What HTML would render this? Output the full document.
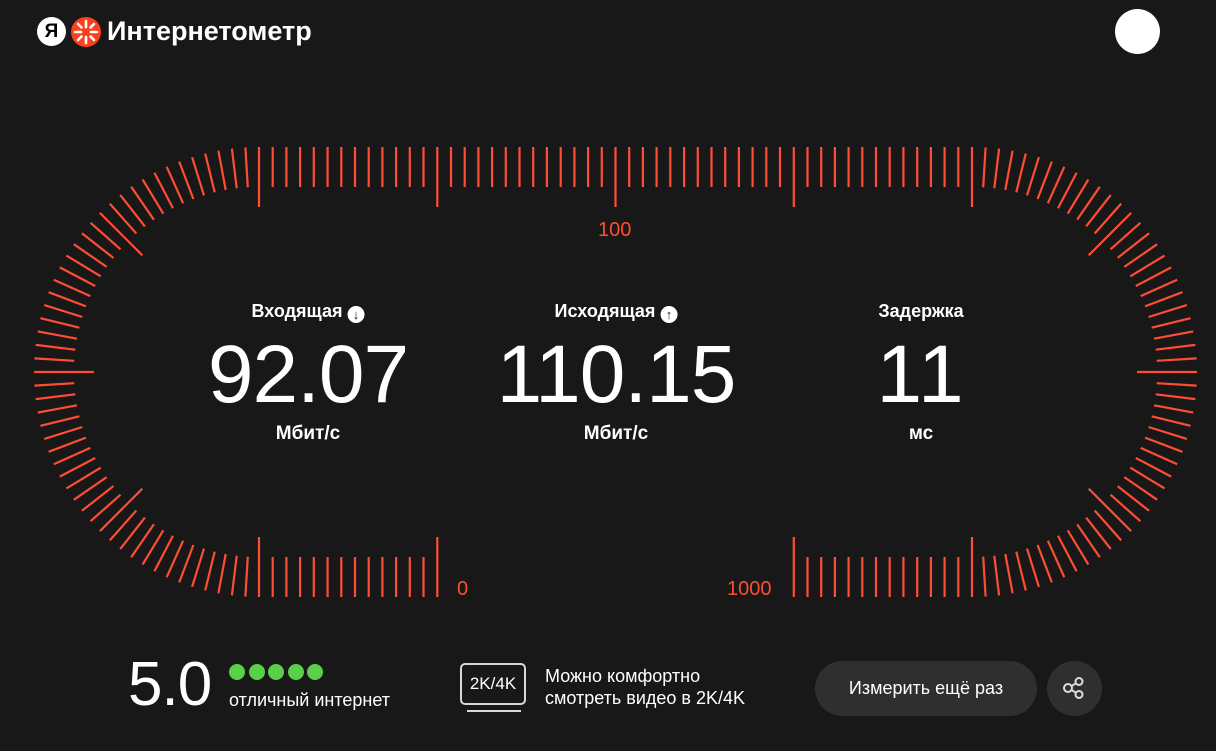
<!DOCTYPE html>
<html><head><meta charset="utf-8"><style>
html,body{margin:0;padding:0;background:#181818;width:1216px;height:751px;overflow:hidden;font-family:"Liberation Sans","Noto Sans CJK SC",sans-serif;color:#fff}
.abs{position:absolute}
.lbl{position:absolute;font-weight:bold;font-size:18px;transform:translateX(-50%);white-space:nowrap;line-height:1}
.num{position:absolute;font-size:82px;transform:translateX(-50%);white-space:nowrap;line-height:1;letter-spacing:-1px}
.unit{position:absolute;font-weight:bold;font-size:19px;transform:translateX(-50%);white-space:nowrap;line-height:1}
.sc{position:absolute;color:#ff4d33;font-size:20px;line-height:1}
.dot{position:absolute;top:664px;width:16px;height:16px;border-radius:50%;background:#5ad04a}
</style></head><body>
<svg class="abs" style="left:0;top:0" width="1216" height="751" id="g"></svg>
<script>
(function(){
var s='',c='#ff4d33',cy=372,R=225,L=259,Rx=972;
function ln(x1,y1,x2,y2){s+='<line x1="'+x1.toFixed(1)+'" y1="'+y1.toFixed(1)+'" x2="'+x2.toFixed(1)+'" y2="'+y2.toFixed(1)+'"/>';}
var step=(Rx-L)/52;
for(var i=0;i<=52;i++){var x=L+i*step,lg=(i%13==0);
 ln(x,cy-R,x,cy-R+(lg?60:40));
 if(i<=13||i>=39) ln(x,cy+R,x,cy+R-(lg?60:40));}
for(var i=1;i<52;i++){var a=Math.PI/2+i*Math.PI/52,lg=(i%13==0),r2=R-(lg?60:40);
 var dx=Math.cos(a),dy=-Math.sin(a);
 ln(L+dx*R,cy+dy*R,L+dx*r2,cy+dy*r2);
 ln(Rx-dx*R,cy+dy*R,Rx-dx*r2,cy+dy*r2);}
document.getElementById('g').innerHTML='<g stroke="'+c+'" stroke-width="2.2">'+s+'</g>';
})();
</script>
<div class="abs" style="left:37px;top:17px;width:29px;height:29px;border-radius:50%;background:#fff;color:#000;font-weight:bold;font-size:19px;text-align:center;line-height:29px">Я</div>
<svg class="abs" style="left:71px;top:17px" width="30" height="30" viewBox="0 0 30 30"><circle cx="15" cy="15" r="15" fill="#fc3f1d"/><g stroke="#fff" stroke-width="2.6" stroke-linecap="round"><line x1="15" y1="4" x2="15" y2="10"/><line x1="7" y1="7" x2="10.5" y2="10.5"/><line x1="23" y1="7" x2="19.5" y2="10.5"/><line x1="4" y1="15" x2="10" y2="15"/><line x1="26" y1="15" x2="20" y2="15"/><line x1="7" y1="23" x2="10.5" y2="19.5"/><line x1="23" y1="23" x2="19.5" y2="19.5"/><line x1="15" y1="26" x2="15" y2="20"/></g></svg>
<div class="abs" style="left:107px;top:16px;font-size:27px;font-weight:bold;line-height:30px">Интернетометр</div>
<div class="abs" style="left:1115px;top:9px;width:45px;height:45px;border-radius:50%;background:#fff"></div>
<div class="sc" style="left:598px;top:220px">100</div>
<div class="sc" style="left:457px;top:579px">0</div>
<div class="sc" style="left:727px;top:579px">1000</div>
<div class="lbl" style="left:308px;top:302px">Входящая <span style="display:inline-block;width:17px;height:17px;border-radius:50%;background:#fff;color:#181818;font-size:13px;line-height:17px;text-align:center;vertical-align:-2px">↓</span></div>
<div class="num" style="left:308px;top:334px">92.07</div>
<div class="unit" style="left:308px;top:424px">Мбит/с</div>
<div class="lbl" style="left:616px;top:302px">Исходящая <span style="display:inline-block;width:17px;height:17px;border-radius:50%;background:#fff;color:#181818;font-size:13px;line-height:17px;text-align:center;vertical-align:-2px">↑</span></div>
<div class="num" style="left:616px;top:334px">110.15</div>
<div class="unit" style="left:616px;top:424px">Мбит/с</div>
<div class="lbl" style="left:921px;top:302px">Задержка</div>
<div class="num" style="left:921px;top:334px;letter-spacing:2px">11</div>
<div class="unit" style="left:921px;top:424px">мс</div>
<div class="abs" style="left:128px;top:654px;font-size:62px;line-height:1;letter-spacing:-1px">5.0</div>
<div class="dot" style="left:229px"></div><div class="dot" style="left:248.5px"></div><div class="dot" style="left:268px"></div><div class="dot" style="left:287.5px"></div><div class="dot" style="left:307px"></div>
<div class="abs" style="left:229px;top:690px;font-size:18px;line-height:20px">отличный интернет</div>
<div class="abs" style="left:460px;top:663px;width:66px;height:42px;border:2px solid #d8d8d8;border-radius:5px;box-sizing:border-box;font-size:17px;text-align:center;line-height:38px">2K/4K</div>
<div class="abs" style="left:467px;top:710px;width:54px;height:2px;background:#d8d8d8"></div>
<div class="abs" style="left:545px;top:665px;font-size:18px;line-height:22px">Можно комфортно<br>смотреть видео в 2K/4K</div>
<div class="abs" style="left:815px;top:661px;width:222px;height:55px;border-radius:28px;background:#2f2f2f;font-size:18px;text-align:center;line-height:55px">Измерить ещё раз</div>
<div class="abs" style="left:1047px;top:661px;width:55px;height:55px;border-radius:50%;background:#2f2f2f"></div>
<svg class="abs" style="left:1062px;top:676px" width="24" height="24" viewBox="0 0 24 24" fill="none" stroke="#ddd" stroke-width="2"><circle cx="6" cy="12" r="4"/><circle cx="17" cy="5.5" r="3.5"/><circle cx="17" cy="18.5" r="3.5"/><line x1="9.5" y1="10" x2="14" y2="7.3"/><line x1="9.5" y1="14" x2="14" y2="16.7"/></svg>
</body></html>
